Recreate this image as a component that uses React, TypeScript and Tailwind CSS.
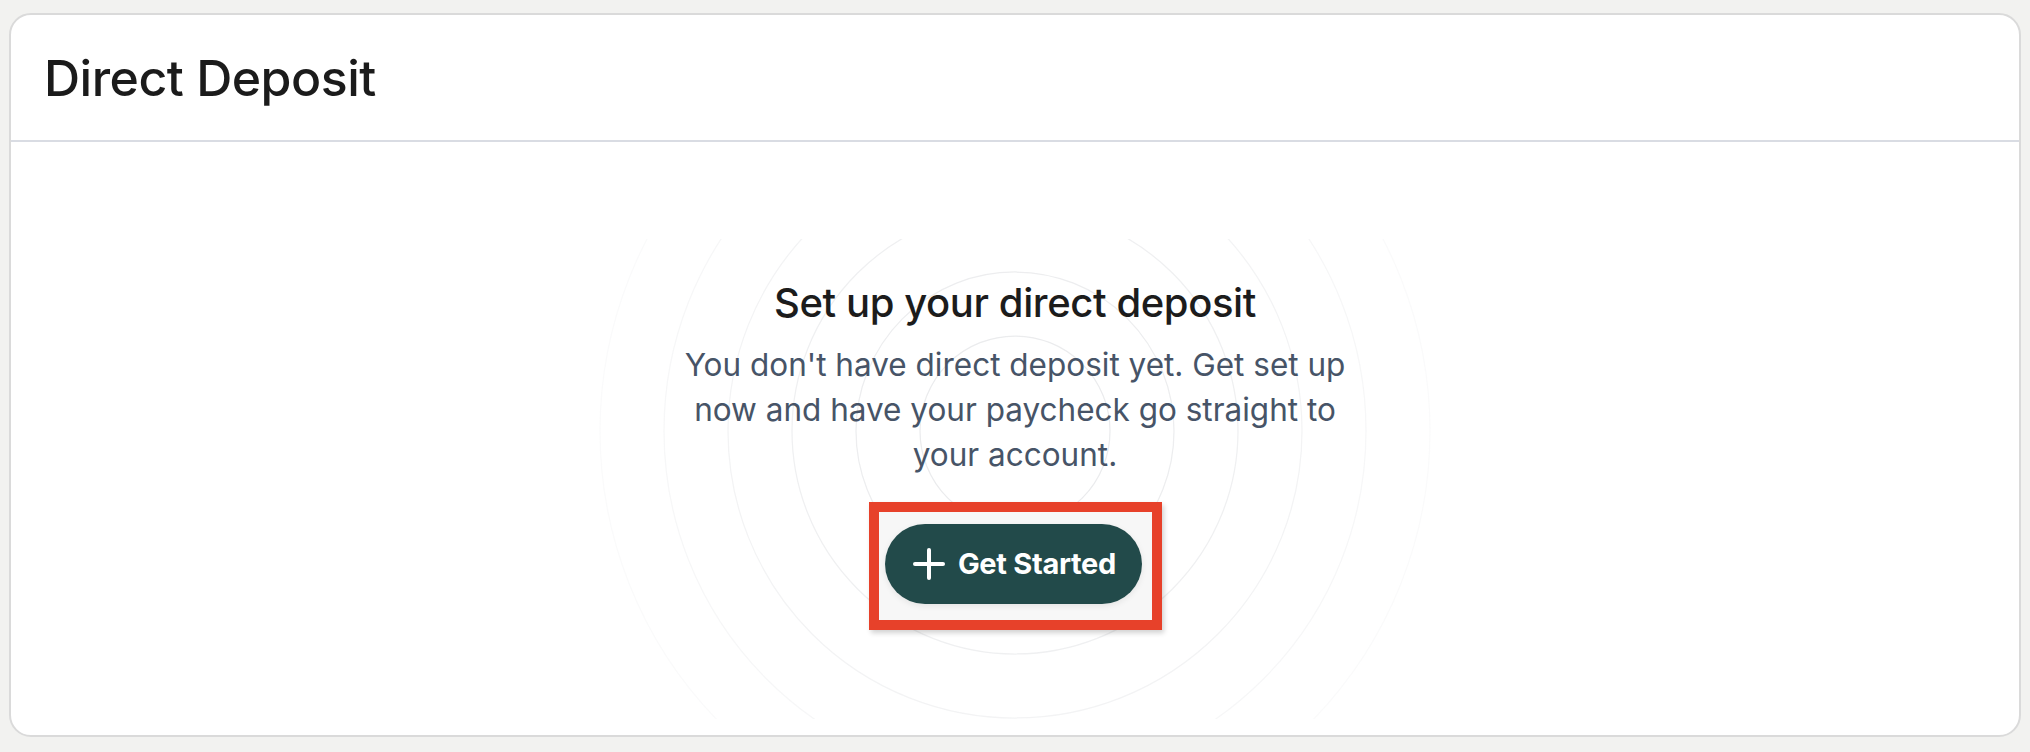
import { Plus } from 'lucide-react';

const RINGS = [95, 159, 223, 287, 351, 415];

function RingPattern() {
  return (
    <svg
      className="pointer-events-none absolute left-1/2 top-[97px] -translate-x-1/2"
      width="960"
      height="480"
      viewBox="0 0 960 480"
      fill="none"
    >
      <defs>
        <radialGradient id="ringFade" cx="480" cy="192" r="440" gradientUnits="userSpaceOnUse">
          <stop offset="0" stopColor="#fff" stopOpacity="1" />
          <stop offset="0.45" stopColor="#fff" stopOpacity="0.75" />
          <stop offset="1" stopColor="#fff" stopOpacity="0.15" />
        </radialGradient>
        <mask id="ringMask">
          <rect width="960" height="480" fill="url(#ringFade)" />
        </mask>
      </defs>
      <g mask="url(#ringMask)">
        {RINGS.map((r) => (
          <circle key={r} cx="480" cy="192" r={r} stroke="#e8e9eb" strokeWidth="1.25" />
        ))}
      </g>
    </svg>
  );
}

export default function App() {
  return (
    <div className="min-h-screen bg-[#f2f2f0] px-[9px] pt-[13px] pb-[15px] font-['Inter',sans-serif]">
      <div className="h-[724px] overflow-hidden rounded-[22px] border-2 border-[#dadada] bg-white">
        {/* Header */}
        <div className="h-[127px] border-b-2 border-[#d9dce3] pl-[33px] pt-[33px]">
          <h1 className="text-[50px] font-medium leading-[60px] tracking-[-0.01em] text-[#1b1b1b]">
            Direct Deposit
          </h1>
        </div>

        {/* Empty state */}
        <div className="relative flex h-[593px] flex-col items-center pt-[136px]">
          <RingPattern />
          <div className="relative flex flex-col items-center text-center">
            <h2 className="text-[40px] font-medium leading-[50px] tracking-[-0.01em] text-[#1c1c1c]">
              Set up your direct deposit
            </h2>
            <p className="mt-[14px] max-w-[720px] text-[31.5px] leading-[45px] text-[#475467]">
              You don't have direct deposit yet. Get set up
              <br />
              now and have your paycheck go straight to
              <br />
              your account.
            </p>
            <div className="ml-[1px] mt-[25px] border-[10px] border-[#e7412a] bg-[#f7f7f7] pb-[16px] pl-[6px] pr-[10px] pt-[12px] shadow-[2px_3px_5px_rgba(0,0,0,0.18)]">
              <button className="flex h-[80px] items-center gap-[11px] rounded-full bg-[#224a4a] pl-[26px] pr-[26px] text-[29px] font-bold tracking-[-0.01em] text-white shadow-[0_2px_6px_rgba(0,0,0,0.08)]">
                <Plus className="-mx-[6px] h-[48px] w-[48px]" strokeWidth={2} />
                Get Started
              </button>
            </div>
          </div>
        </div>
      </div>
    </div>
  );
}
